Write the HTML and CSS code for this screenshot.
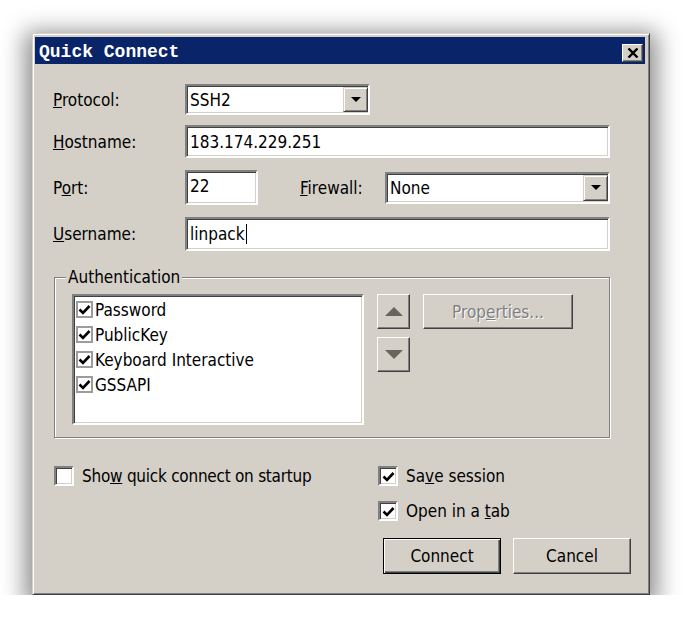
FILE: index.html
```html
<!DOCTYPE html>
<html>
<head>
<meta charset="utf-8">
<title>Quick Connect</title>
<link rel="stylesheet" href="styles.css">
</head>
<body>
<div class="window">
  <div class="titlebar">
    <span class="title">Quick Connect</span>
    <div class="close">
      <svg width="12" height="10" viewBox="0 0 12 10"><path d="M1.5 0.5 L10.5 9.5 M10.5 0.5 L1.5 9.5" stroke="#000" stroke-width="2.4" fill="none"/></svg>
    </div>
  </div>
  <div class="content">
    <div class="row row-protocol">
      <div class="label"><u>P</u>rotocol:</div>
      <div class="field combo w-protocol">
        <span class="val">SSH2</span>
        <div class="dd"><svg width="10" height="5" viewBox="0 0 10 5"><polygon points="0,0 10,0 5,5" fill="#000"/></svg></div>
      </div>
    </div>
    <div class="row row-host">
      <div class="label"><u>H</u>ostname:</div>
      <div class="field w-wide"><span class="val">183.174.229.251</span></div>
    </div>
    <div class="row row-port">
      <div class="label">P<u>o</u>rt:</div>
      <div class="field w-port top"><span class="val">22</span></div>
      <div class="label fw-label"><u>F</u>irewall:</div>
      <div class="field combo w-firewall">
        <span class="val">None</span>
        <div class="dd"><svg width="10" height="5" viewBox="0 0 10 5"><polygon points="0,0 10,0 5,5" fill="#000"/></svg></div>
      </div>
    </div>
    <div class="row row-user">
      <div class="label"><u>U</u>sername:</div>
      <div class="field w-wide"><span class="val">linpack</span><span class="caret"></span></div>
    </div>

    <fieldset class="group">
      <legend>Authentication</legend>
      <div class="listbox">
        <div class="item"><span class="lcheck"><svg width="13" height="11" viewBox="0 0 13 11"><polyline points="1.5,5.5 5,9 11.5,2" stroke="#000" stroke-width="2.6" fill="none"/></svg></span>Password</div>
        <div class="item"><span class="lcheck"><svg width="13" height="11" viewBox="0 0 13 11"><polyline points="1.5,5.5 5,9 11.5,2" stroke="#000" stroke-width="2.6" fill="none"/></svg></span>PublicKey</div>
        <div class="item"><span class="lcheck"><svg width="13" height="11" viewBox="0 0 13 11"><polyline points="1.5,5.5 5,9 11.5,2" stroke="#000" stroke-width="2.6" fill="none"/></svg></span>Keyboard Interactive</div>
        <div class="item"><span class="lcheck"><svg width="13" height="11" viewBox="0 0 13 11"><polyline points="1.5,5.5 5,9 11.5,2" stroke="#000" stroke-width="2.6" fill="none"/></svg></span>GSSAPI</div>
      </div>
      <div class="arrows">
        <div class="raised arrow-btn"><svg width="18" height="9" viewBox="0 0 18 9"><polygon points="0,9 9,0 18,9" fill="#66665f"/></svg></div>
        <div class="raised arrow-btn"><svg width="18" height="9" viewBox="0 0 18 9"><polygon points="0,0 18,0 9,9" fill="#66665f"/></svg></div>
      </div>
      <div class="raised props">Prop<u>e</u>rties...</div>
    </fieldset>

    <div class="options">
      <div class="opt-col">
        <div class="check-row"><span class="cbox"></span><span>Sho<u>w</u> quick connect on startup</span></div>
      </div>
      <div class="opt-col right">
        <div class="check-row"><span class="cbox"><svg width="13" height="11" viewBox="0 0 13 11"><polyline points="1.5,5.5 5,9 11.5,2" stroke="#000" stroke-width="2.6" fill="none"/></svg></span><span>Sa<u>v</u>e session</span></div>
        <div class="check-row"><span class="cbox"><svg width="13" height="11" viewBox="0 0 13 11"><polyline points="1.5,5.5 5,9 11.5,2" stroke="#000" stroke-width="2.6" fill="none"/></svg></span><span>Open in a <u>t</u>ab</span></div>
      </div>
    </div>

    <div class="buttons">
      <div class="btn default">Connect</div>
      <div class="btn raised">Cancel</div>
    </div>
  </div>
</div>
</body>
</html>
```

FILE: styles.css
```css
* { box-sizing: border-box; }

html { min-height: 100%; background: #fff; }

body {
  margin: 0;
  padding: 33px 0 0 32px;
  background: #fff;
  font-family: "DejaVu Sans Condensed", "DejaVu Sans", sans-serif;
  font-stretch: condensed;
  font-size: 17px;
  color: #000;
}

.window {
  width: 618px;
  height: 562px;
  background: #d4d0c8;
  border: 1px solid;
  border-color: #d4d0c8 #404040 #404040 #d4d0c8;
  box-shadow: inset 1px 1px 0 #fff, inset -1px -1px 0 #808080, 0 6px 22px 7px rgba(0,0,0,0.45);
  padding: 2px 4px 2px 2px;
  display: flex;
  flex-direction: column;
}

.titlebar {
  height: 27px;
  margin-top: 1px;
  background: #0a246a;
  display: flex;
  align-items: center;
  justify-content: space-between;
  padding: 0 2px 0 4px;
}

.title {
  font-family: "Liberation Mono", monospace;
  font-stretch: normal;
  font-weight: bold;
  font-size: 18px;
  color: #fff;
  margin-top: 2px;
}

.close {
  width: 21px;
  height: 18px;
  margin-top: 4px;
  background: #d4d0c8;
  border: 1px solid;
  border-color: #fff #404040 #404040 #fff;
  box-shadow: inset -1px -1px 0 #808080;
  display: flex;
  align-items: center;
  justify-content: center;
}

.content {
  flex: 1;
  padding: 20px 14px 0 18px;
  display: flex;
  flex-direction: column;
}

.row { display: flex; align-items: center; }
.label { width: 132px; flex: none; }
.row-protocol { height: 31px; margin-bottom: 10px; }
.row-host { height: 33px; margin-bottom: 12px; }
.row-port { height: 35px; margin-bottom: 12px; }
.row-user { height: 34px; }

.field {
  height: 100%;
  background: #fff;
  border: 2px solid;
  border-color: #808080 #fff #fff #808080;
  box-shadow: inset 1px 1px 0 #404040, inset -1px -1px 0 #d4d0c8;
  padding: 0 3px;
  display: flex;
  align-items: center;
  flex: none;
}
.field.top { align-items: flex-start; padding-top: 4px; }
.val { white-space: nowrap; }
.caret { display: inline-block; width: 1px; height: 20px; background: #000; margin-left: 1px; }

.w-protocol { width: 185px; }
.w-wide { width: 425px; }
.w-port { width: 73px; }
.w-firewall { width: 225px; height: 32px; }
.fw-label { width: 85px; margin-left: 42px; }

.combo { padding-right: 0; }
.combo .val { flex: 1; }
.dd {
  width: 25px;
  align-self: stretch;
  margin: 1px 0;
  background: #d4d0c8;
  border: 1px solid;
  border-color: #d4d0c8 #404040 #404040 #d4d0c8;
  box-shadow: inset 1px 1px 0 #fff, inset -1px -1px 0 #808080;
  display: flex;
  align-items: center;
  justify-content: center;
}

.group {
  margin: 16px 0 0 1px;
  width: 556px;
  border: 1px solid #808080;
  box-shadow: inset 1px 1px 0 #fff, 1px 1px 0 #fff;
  padding: 7px 10px 12px 17px;
  display: flex;
  align-items: flex-start;
  gap: 13px;
  min-inline-size: 0;
}
.group legend {
  padding: 0 2px;
  margin-left: -6px;
  line-height: 20px;
  background: #d4d0c8;
}

.listbox {
  width: 292px;
  height: 131px;
  background: #fff;
  border: 2px solid;
  border-color: #808080 #fff #fff #808080;
  box-shadow: inset 1px 1px 0 #404040, inset -1px -1px 0 #d4d0c8;
  padding: 1px 0 0 2px;
  flex: none;
}
.item { height: 25px; display: flex; align-items: center; gap: 2px; white-space: nowrap; }
.lcheck {
  width: 17px;
  height: 17px;
  border: 2px solid #9c9c9c;
  background: #fff;
  display: flex;
  align-items: center;
  justify-content: center;
}

.raised {
  background: #d4d0c8;
  border: 1px solid;
  border-color: #fff #404040 #404040 #fff;
  box-shadow: inset -1px -1px 0 #808080;
}
.arrows { display: flex; flex-direction: column; gap: 8px; }
.arrow-btn { width: 33px; height: 35px; display: flex; align-items: center; justify-content: center; }
.props {
  width: 150px;
  height: 35px;
  display: flex;
  align-items: center;
  justify-content: center;
  color: #808080;
  text-shadow: 1px 1px 0 #fff;
}

.options {
  display: grid;
  grid-template-columns: 324px 1fr;
  margin-top: 28px;
  padding-left: 1px;
}
.opt-col { display: flex; flex-direction: column; gap: 15px; }
.check-row { display: flex; align-items: center; gap: 8px; height: 20px; white-space: nowrap; }
.opt-col:first-child .check-row span:last-child { letter-spacing: -0.25px; }
.cbox {
  width: 20px;
  height: 20px;
  flex: none;
  background: #fff;
  border: 2px solid;
  border-color: #808080 #fff #fff #808080;
  box-shadow: inset 1px 1px 0 #404040, inset -1px -1px 0 #d4d0c8;
  display: flex;
  align-items: center;
  justify-content: center;
}

.buttons {
  display: flex;
  justify-content: flex-end;
  gap: 12px;
  margin-top: 17px;
}
.btn {
  width: 118px;
  height: 36px;
  display: flex;
  align-items: center;
  justify-content: center;
}
.btn.default {
  background: #d4d0c8;
  border: 1px solid #000;
  box-shadow: inset 1px 1px 0 #fff, inset -1px -1px 0 #404040, inset -2px -2px 0 #808080;
}
```
